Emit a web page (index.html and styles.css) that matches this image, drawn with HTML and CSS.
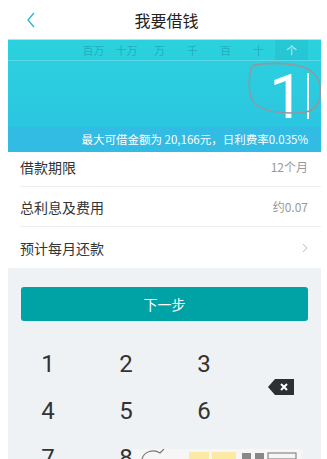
FILE: index.html
```html
<!DOCTYPE html>
<html lang="zh-CN">
<head>
    <meta charset="UTF-8">
    <meta name="viewport" content="width=device-width, initial-scale=1.0">
    <title>我要借钱</title>
    <link rel="stylesheet" href="styles.css">
</head>
<body>
    <div class="app">
        <div class="header">
            <svg class="back" width="12" height="18" viewBox="0 0 12 18">
                <path d="M9 2 L3 9 L9 16" fill="none" stroke="#2bb8d8" stroke-width="1.4"/>
            </svg>
            <div class="title">我要借钱</div>
        </div>

        <div class="amount">
            <div class="units">
                <span class="unit">百万</span>
                <span class="unit">十万</span>
                <span class="unit">万</span>
                <span class="unit">千</span>
                <span class="unit">百</span>
                <span class="unit">十</span>
                <span class="unit active">个</span>
            </div>
            <div class="value">
                <span class="num">1</span><span class="cursor"></span>
                <svg class="scribble" width="80" height="56" viewBox="0 0 80 56">
                    <path d="M8 4 C24 1 50 2 62 8 C72 14 76 24 74 36 C72 48 62 53 46 52 C30 52 16 50 8 42 C2 34 3 22 4 12 C4 7 6 4 12 4" fill="none" stroke="#8e9aa3" stroke-width="1.6"/>
                </svg>
            </div>
            <div class="info">最大可借金额为 20,166元，日利费率0.035%</div>
        </div>

        <div class="list">
            <div class="row">
                <span class="label">借款期限</span>
                <span class="val">12个月</span>
            </div>
            <div class="row">
                <span class="label">总利息及费用</span>
                <span class="val">约0.07</span>
            </div>
            <div class="row">
                <span class="label">预计每月还款</span>
                <svg width="6" height="10" viewBox="0 0 6 10">
                    <path d="M1 1 L5 5 L1 9" fill="none" stroke="#bbb" stroke-width="1"/>
                </svg>
            </div>
        </div>

        <div class="bottom">
            <button class="next">下一步</button>
            <div class="keypad">
                <div class="key">1</div>
                <div class="key">2</div>
                <div class="key">3</div>
                <div class="key del">
                    <svg width="26" height="16" viewBox="0 0 26 16">
                        <path d="M7 0 H26 V16 H7 L0 8 Z" fill="#2b3035"/>
                        <path d="M13 5 L19 11 M19 5 L13 11" stroke="#fff" stroke-width="2"/>
                    </svg>
                </div>
                <div class="key">4</div>
                <div class="key">5</div>
                <div class="key">6</div>
                <div class="key">7</div>
                <div class="key">8</div>
                <div class="key">9</div>
            </div>
            <div class="overlay">
                <svg width="170" height="10" viewBox="0 0 170 10">
                    <path d="M10 10 C12 2 22 0 28 4 L32 0" fill="none" stroke="#777" stroke-width="1.2"/>
                    <rect x="57" y="3" width="20" height="7" fill="#fbe9a6"/>
                    <rect x="80" y="3" width="24" height="7" fill="#fbe9a6"/>
                    <rect x="110" y="4" width="9" height="6" fill="#888"/>
                    <rect x="123" y="4" width="9" height="6" fill="#888"/>
                    <rect x="136" y="4" width="28" height="6" fill="none" stroke="#888" stroke-width="1.2"/>
                </svg>
            </div>
        </div>
    </div>
</body>
</html>
```

FILE: styles.css
```css
* {
    box-sizing: border-box;
}

body {
    margin: 0;
    background: #fff;
    font-family: "Noto Sans CJK SC", "Noto Sans", sans-serif;
}

.app {
    width: 313px;
    height: 459px;
    margin-left: 8px;
    overflow: hidden;
    position: relative;
    background: #eef2f5;
}

.header {
    height: 40px;
    background: #fff;
    border-bottom: 1px solid #a9e5ee;
    display: flex;
    align-items: center;
    justify-content: center;
    position: relative;
}

.back {
    position: absolute;
    left: 17px;
    top: 11px;
}

.title {
    font-size: 16px;
    color: #222;
    margin-left: 4px;
}

.amount {
    height: 107px;
    background: linear-gradient(#2bd2dd, #2bc3e2);
    display: flex;
    flex-direction: column;
}

.units {
    height: 21px;
    display: flex;
    justify-content: flex-end;
    padding-right: 13px;
    border-bottom: 1px solid rgba(255, 255, 255, 0.22);
}

.unit {
    width: 33px;
    text-align: center;
    font-size: 11px;
    line-height: 20px;
    color: rgba(20, 140, 160, 0.5);
}

.unit.active {
    background: rgba(0, 120, 140, 0.1);
    color: rgba(255, 255, 255, 0.7);
}

.value {
    flex: 1;
    display: flex;
    justify-content: flex-end;
    align-items: center;
    padding-right: 12px;
    position: relative;
}

.num {
    font-family: Roboto, sans-serif;
    font-weight: 400;
    font-size: 62px;
    line-height: 60px;
    color: #fff;
    margin-top: 6px;
}

.cursor {
    width: 2px;
    height: 46px;
    background: #fff;
    margin-left: 3px;
    margin-top: 4px;
}

.scribble {
    position: absolute;
    right: -5px;
    top: 0;
}

.info {
    height: 25px;
    line-height: 25px;
    background: #32bbe3;
    color: #fff;
    font-size: 11.5px;
    text-align: right;
    padding-right: 13px;
}

.list {
    background: #fff;
    padding-left: 12px;
}

.row {
    height: 40px;
    display: flex;
    justify-content: space-between;
    align-items: center;
    padding-right: 13px;
    border-bottom: 1px solid #eceef0;
}

.row:last-child {
    border-bottom: none;
    height: 41px;
}

.label {
    font-size: 14px;
    color: #333;
}

.val {
    font-size: 12px;
    color: #999;
}

.bottom {
    padding: 19px 13px 0 13px;
    position: relative;
}

.next {
    display: block;
    width: 100%;
    height: 34px;
    border: none;
    border-radius: 3px;
    background: #00a3a5;
    color: #fff;
    font-family: inherit;
    font-size: 14px;
}

.keypad {
    display: grid;
    grid-template-columns: 78px 78px 78px 1fr;
    grid-auto-rows: 47px;
    margin: 19px -13px 0 -12px;
}

.key {
    display: flex;
    align-items: center;
    justify-content: center;
    font-family: Roboto, sans-serif;
    font-size: 24px;
    color: #333;
}

.key.del {
    grid-row: span 2;
    padding-right: 2px;
}

.overlay {
    position: absolute;
    left: 124px;
    top: 181px;
    width: 170px;
    height: 10px;
    background: #f6f6f6;
}

.overlay svg {
    display: block;
}
```
